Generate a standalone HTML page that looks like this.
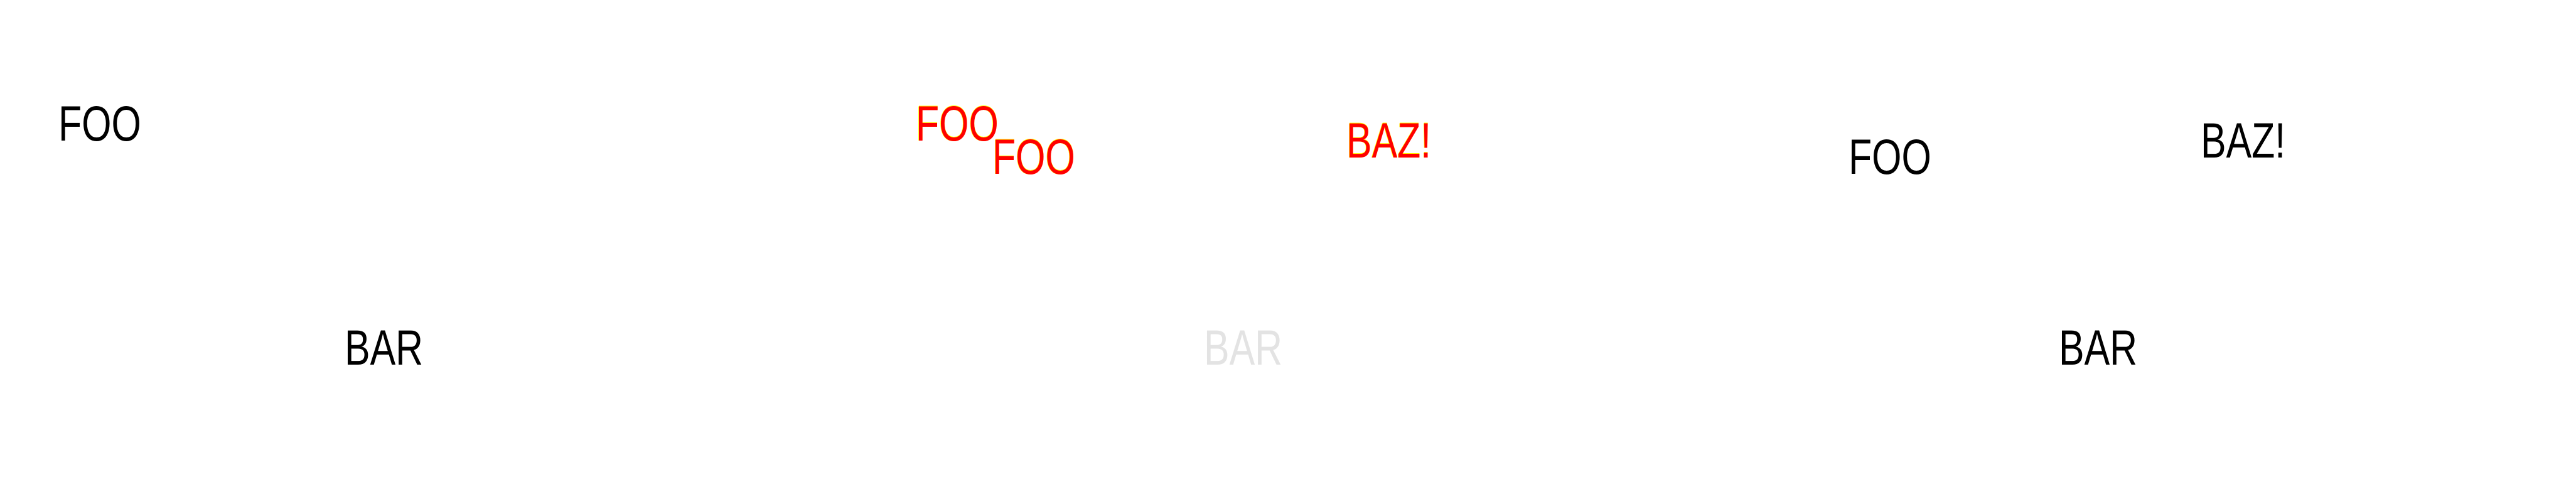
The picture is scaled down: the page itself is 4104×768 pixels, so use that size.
<!DOCTYPE html>
<html><head><style>
html,body{margin:0;padding:0;background:#fff;width:4104px;height:768px;overflow:hidden;position:relative}
.t{position:absolute;font-family:"Liberation Sans",sans-serif;font-size:79px;line-height:1;white-space:nowrap;transform:scaleX(0.77);transform-origin:0 0;color:#000}
.r{color:#f00;text-shadow:-1px 0 0 #ff0,0 -1px 0 #ff0}
.g{color:#e3e3e3}
</style></head><body>
<div class="t" style="left:93px;top:157px">FOO</div>
<div class="t" style="left:549px;top:514px">BAR</div>
<div class="t r" style="left:1459px;top:157px">FOO</div>
<div class="t r" style="left:1581px;top:210px">FOO</div>
<div class="t r" style="left:2145px;top:184px">BAZ!</div>
<div class="t g" style="left:1918px;top:514px">BAR</div>
<div class="t" style="left:2945px;top:210px">FOO</div>
<div class="t" style="left:3506px;top:184px">BAZ!</div>
<div class="t" style="left:3280px;top:514px">BAR</div>
</body></html>
